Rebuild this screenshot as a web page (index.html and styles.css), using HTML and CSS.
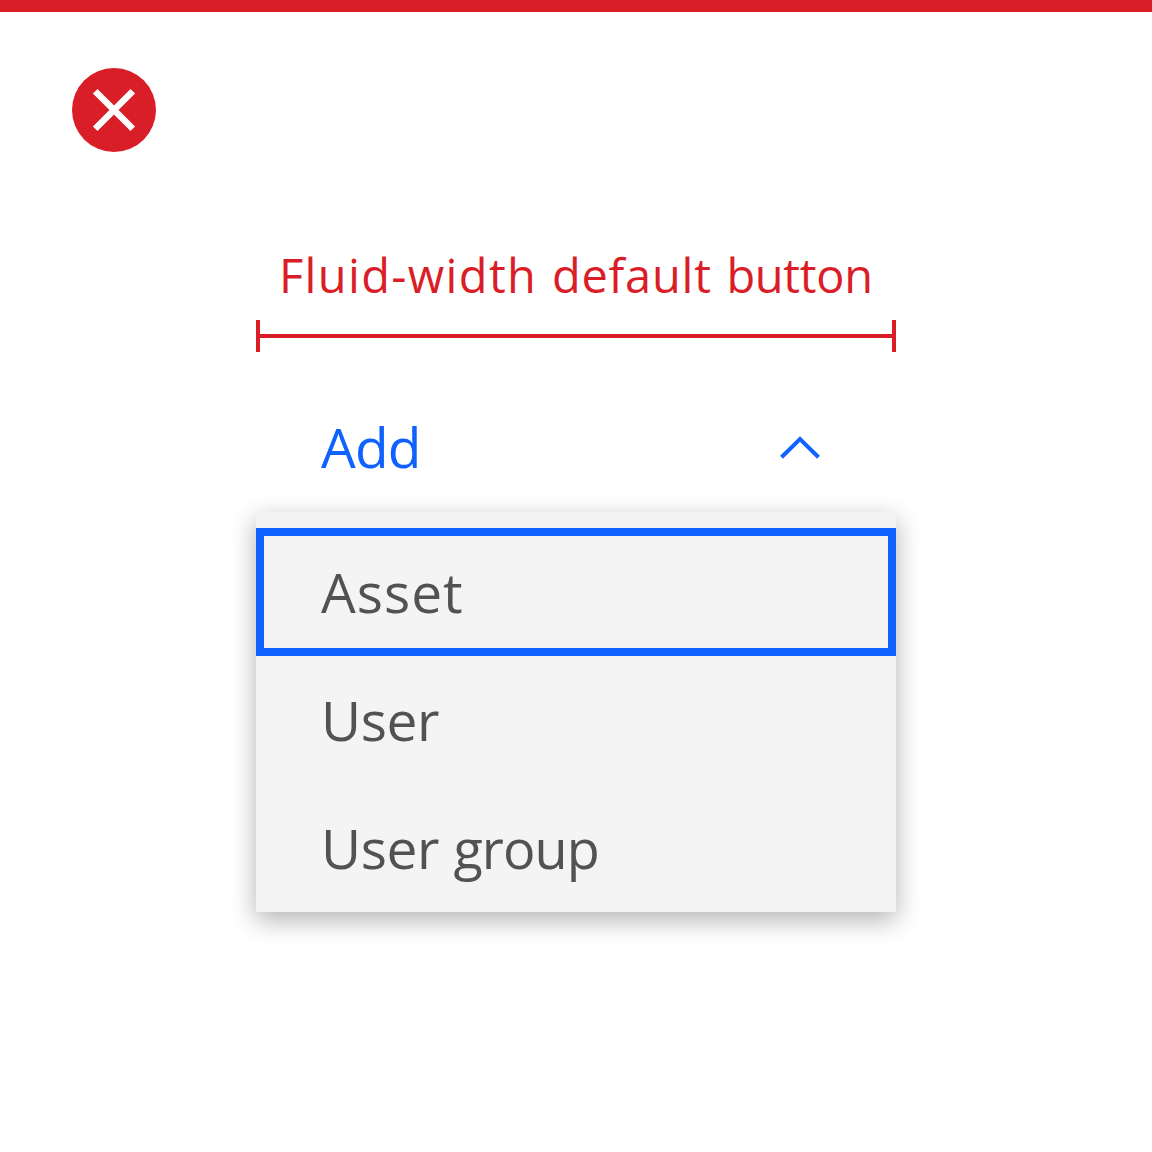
FILE: index.html
```html
<!DOCTYPE html>
<html lang="en">
<head>
<meta charset="utf-8">
<title>Menu button width</title>
<link rel="stylesheet" href="styles.css">
</head>
<body>
<main class="example">
  <svg class="status" viewBox="0 0 84 84" aria-hidden="true">
    <circle cx="42" cy="42" r="42"/>
    <path d="M23.2 23.2 60.8 60.8M60.8 23.2 23.2 60.8"/>
  </svg>
  <section class="demo">
    <div class="caption"><span class="caption-fluid">Fluid-width</span> <span class="caption-default">default</span> <span class="caption-button">button</span></div>
    <div class="measure"></div>
    <button class="trigger" type="button">
      <span class="label-add">Add</span>
      <svg class="chevron" viewBox="0 0 40 24" aria-hidden="true"><path d="M1.5 22.2 20 4 38.5 22.2"/></svg>
    </button>
    <ul class="menu">
      <li class="item item-focused"><span class="label-asset">Asset</span></li>
      <li class="item"><span class="label-user">User</span></li>
      <li class="item"><span class="label-user">User</span> <span class="label-group">group</span></li>
    </ul>
  </section>
</main>
</body>
</html>
```
FILE: styles.css
```css
* { box-sizing: border-box; }

body {
  margin: 0;
  background: #fff;
  font-family: "Open Sans", "Noto Sans", sans-serif;
}

.example {
  height: 1152px;
  border-top: 12px solid #da1e28;
  padding: 56px 72px 0;
}

.status { display: block; width: 84px; height: 84px; }
.status circle { fill: #da1e28; }
.status path { stroke: #fff; stroke-width: 6.5; fill: none; }

.demo {
  width: 640px;
  margin: 88px auto 0;
}

.caption {
  height: 80px;
  padding-left: 23px;
  color: #da1e28;
  font-size: 47px;
  line-height: 70px;
  letter-spacing: 1px;
  white-space: nowrap;
}

.caption-fluid { margin-right: 1.5px; letter-spacing: 1.35px; }
.caption-default { margin-right: 1.5px; letter-spacing: .75px; }
.caption-button { letter-spacing: -.3px; }

.measure {
  height: 32px;
  border: solid #da1e28;
  border-width: 0 4px;
  background: linear-gradient(#da1e28, #da1e28) 0 14px / 100% 4px no-repeat;
}

.trigger {
  display: flex;
  align-items: center;
  justify-content: space-between;
  width: 100%;
  height: 128px;
  margin-top: 32px;
  padding: 0 76px 2px 65px;
  border: 0;
  background: none;
  color: #0f62fe;
  font: 55px/1 "Open Sans", "Noto Sans", sans-serif;
}

.label-add { padding-bottom: 2px; letter-spacing: -.8px; }

.chevron { width: 40px; height: 24px; }
.chevron path { fill: none; stroke: #0f62fe; stroke-width: 4; }

.menu {
  margin: 0;
  padding: 16px 0 0;
  list-style: none;
  background: #f4f4f4;
  box-shadow: 0 8px 24px rgba(0, 0, 0, .3);
}

.item {
  height: 128px;
  padding-left: 65px;
  color: #525252;
  font-size: 55px;
  line-height: 127px;
  letter-spacing: 1px;
}

.label-user { letter-spacing: -.4px; }
.label-group { margin-left: -1px; font-size: 54px; letter-spacing: -.9px; }

.item-focused {
  border: 8px solid #0f62fe;
  padding-left: 57px;
  line-height: 112px;
}
```
